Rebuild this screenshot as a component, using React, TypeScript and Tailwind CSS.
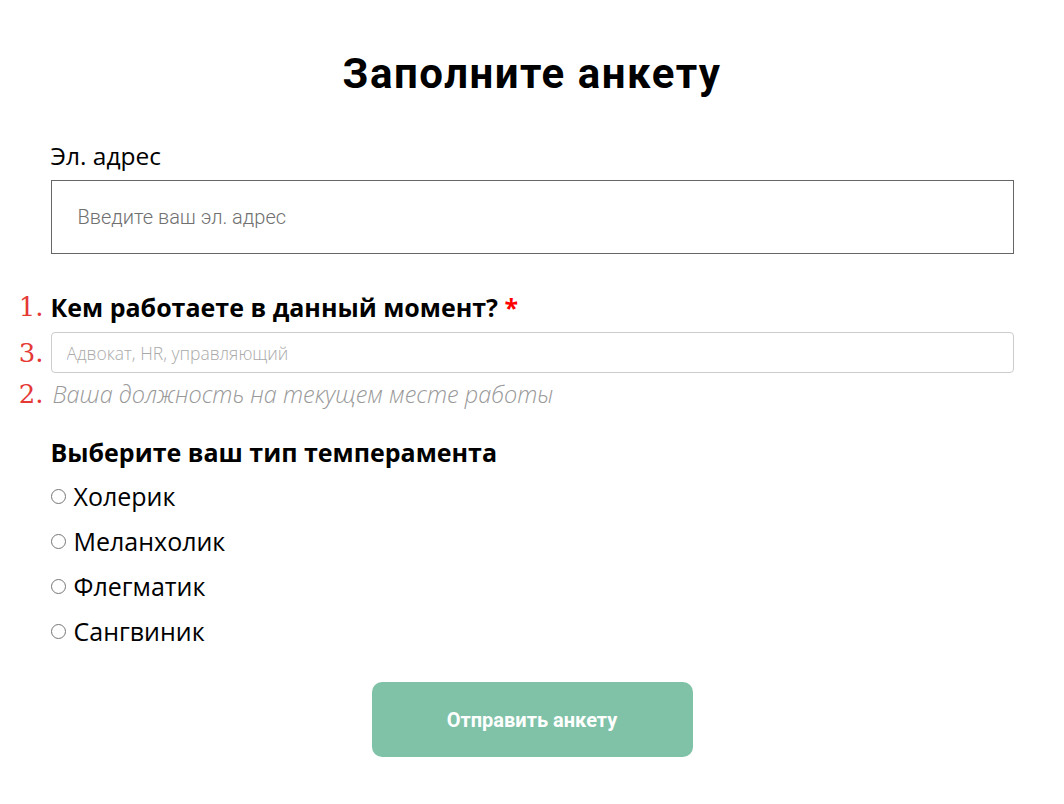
import { useState } from 'react';

const TEMPERAMENTS = ['Холерик', 'Меланхолик', 'Флегматик', 'Сангвиник'];

function Mark({ n }: { n: string }) {
  return (
    <span className="absolute right-full mr-[7px] top-1/2 -translate-y-1/2 font-['DejaVu_Serif',serif] text-[26px] leading-none text-[#e53935]">
      {n}
    </span>
  );
}

export default function App() {
  const [email, setEmail] = useState('');
  const [job, setJob] = useState('');
  const [temper, setTemper] = useState<string | null>(null);

  return (
    <div className="min-h-screen bg-white">
      <form
        className="mx-auto w-[963px] pt-[50px] font-['Open_Sans',sans-serif]"
        onSubmit={(e) => e.preventDefault()}
      >
        <h1 className="text-center font-['Roboto',sans-serif] text-[42px] font-bold leading-[48px] tracking-[1.5px] text-black">
          Заполните анкету
        </h1>

        <label htmlFor="email" className="mt-[43px] block text-[24.5px] leading-[30px] text-black">
          Эл. адрес
        </label>
        <input
          id="email"
          type="email"
          value={email}
          onChange={(e) => setEmail(e.target.value)}
          placeholder="Введите ваш эл. адрес"
          className="mt-[9px] block h-[74px] w-full border border-[#666] px-[26px] font-['Roboto',sans-serif] text-[20px] font-light text-black outline-none placeholder:text-[#707070]"
        />

        <div className="relative mt-[38px]">
          <Mark n="1." />
          <label htmlFor="job" className="block text-[25px] font-bold leading-[30px] text-black">
            Кем работаете в данный момент? <span className="text-[#f00]">*</span>
          </label>
        </div>
        <div className="relative mt-[10px]">
          <Mark n="3." />
          <input
            id="job"
            type="text"
            value={job}
            onChange={(e) => setJob(e.target.value)}
            placeholder="Адвокат, HR, управляющий"
            className="block h-[41px] w-full rounded-[4px] border border-[#ccc] px-[15px] text-[17.5px] font-light text-black outline-none placeholder:text-[#aaa]"
          />
        </div>
        <div className="relative mt-[5px]">
          <Mark n="2." />
          <p className="pl-[2px] text-[23.5px] font-light italic leading-[32px] text-[#999]">
            Ваша должность на текущем месте работы
          </p>
        </div>

        <fieldset className="mt-[27px]">
          <legend className="text-[25px] font-bold leading-[30px] text-black">
            Выберите ваш тип темперамента
          </legend>
          <div className="mt-[7px] flex flex-col">
            {TEMPERAMENTS.map((t) => (
              <label key={t} className="flex h-[45px] cursor-pointer items-center gap-[8px] text-[25px] text-black">
                <input
                  type="radio"
                  name="temper"
                  checked={temper === t}
                  onChange={() => setTemper(t)}
                  className="h-[15px] w-[15px] shrink-0 appearance-none rounded-full border border-[#767676] bg-white checked:border-[5px] checked:border-[#0075ff]"
                />
                {t}
              </label>
            ))}
          </div>
        </fieldset>

        <div className="mt-[28px] flex justify-center">
          <button
            type="submit"
            className="h-[75px] w-[321px] rounded-[10px] bg-[#80c2a8] font-['Roboto',sans-serif] text-[20px] font-bold text-white"
          >
            Отправить анкету
          </button>
        </div>
      </form>
    </div>
  );
}
